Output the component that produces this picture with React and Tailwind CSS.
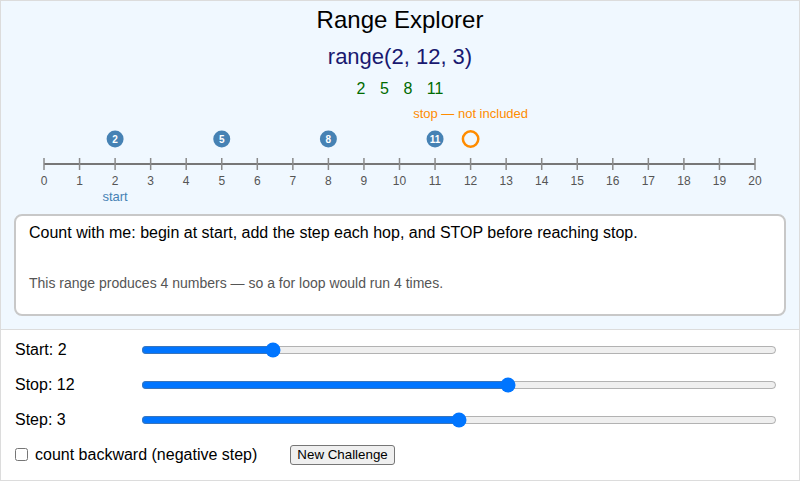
import React, { useState } from 'react';

const font = "font-['Liberation_Sans',Arial,Helvetica,sans-serif]";

// number line geometry (svg coords)
const X0 = 43;
const UNIT = 35.55;
const LINE_Y = 66;
const MAX = 20;

const xOf = (v) => X0 + v * UNIT;

const buildRange = (start, stop, step) => {
  const out = [];
  if (step > 0) for (let i = start; i < stop; i += step) out.push(i);
  if (step < 0) for (let i = start; i > stop; i += step) out.push(i);
  return out;
};

const NumberLine = ({ start, stop, values }) => {
  const ticks = Array.from({ length: MAX + 1 }, (_, i) => i);
  return (
    <svg width="798" height="116" className="block" fontFamily="'Liberation Sans', Arial, sans-serif">
      <text x={xOf(stop)} y="20" textAnchor="middle" fontSize="13" fill="#ff8c00">
        stop — not included
      </text>

      <line x1={xOf(0)} y1={LINE_Y} x2={xOf(MAX)} y2={LINE_Y} stroke="#777" strokeWidth="2" />
      {ticks.map((t) => (
        <g key={t}>
          <line x1={xOf(t)} y1={LINE_Y - 6} x2={xOf(t)} y2={LINE_Y + 6} stroke="#8a8a8a" strokeWidth="1.5" />
          <text x={xOf(t)} y={LINE_Y + 21} textAnchor="middle" fontSize="12" fill="#555">
            {t}
          </text>
        </g>
      ))}

      <text x={xOf(start)} y={LINE_Y + 37} textAnchor="middle" fontSize="13" fill="#4682b4">
        start
      </text>

      {values.map((v) => (
        <g key={v}>
          <circle cx={xOf(v)} cy="41" r="8.5" fill="#4682b4" />
          <text x={xOf(v)} y="44.5" textAnchor="middle" fontSize="10" fontWeight="bold" fill="#fff">
            {v}
          </text>
        </g>
      ))}

      <circle cx={xOf(stop)} cy="41" r="7.7" fill="none" stroke="#ff8c00" strokeWidth="2.5" />
    </svg>
  );
};

const SliderRow = ({ label, min, max, value, onChange }) => (
  <div className="h-[35px] flex items-center">
    <span className="w-[126px] text-[16px] text-black">{label}</span>
    <input
      type="range"
      min={min}
      max={max}
      value={value}
      onChange={(e) => onChange(Number(e.target.value))}
      className="w-[636px] m-0 accent-[#0075ff]"
    />
  </div>
);

const App = () => {
  const [start, setStart] = useState(2);
  const [stop, setStop] = useState(12);
  const [step, setStep] = useState(3);
  const [backward, setBackward] = useState(false);

  const realStep = backward ? -step : step;
  const values = buildRange(start, stop, realStep);

  return (
    <div className={`w-[800px] h-[481px] border border-[#dcdcdc] flex flex-col bg-white ${font}`}>
      {/* sketch area */}
      <div className="h-[329px] bg-[#f0f8ff] border-b border-[#dcdcdc] flex flex-col">
        <div className="pt-[5px] h-[33px] text-center text-[24px] leading-[28px] text-black">Range Explorer</div>
        <div className="mt-[9px] h-[28px] text-center text-[22px] leading-[28px] text-[#191970]">
          range({start}, {stop}, {realStep})
        </div>
        <div className="mt-[8px] h-[20px] flex justify-center gap-[14.5px] text-[16px] leading-[20px] text-[#006b00]">
          {values.map((v) => (
            <span key={v}>{v}</span>
          ))}
        </div>

        <div className="-mt-[1px]">
          <NumberLine start={start} stop={stop} values={values} />
        </div>

        <div className="mx-[13px] h-[102px] bg-white border-2 border-[#c8c8c8] rounded-[8px] pl-[13px] pt-[7px]">
          <p className="text-[16px] leading-[20px] text-black">
            Count with me: begin at start, add the step each hop, and STOP before reaching stop.
          </p>
          <p className="mt-[32px] text-[14px] leading-[17px] text-[#555]">
            This range produces {values.length} numbers — so a for loop would run {values.length} times.
          </p>
        </div>
      </div>

      {/* controls */}
      <div className="flex-1 pt-[2px] pl-[14px]">
        <SliderRow label={`Start: ${start}`} min={0} max={10} value={start} onChange={setStart} />
        <SliderRow label={`Stop: ${stop}`} min={1} max={20} value={stop} onChange={setStop} />
        <SliderRow label={`Step: ${step}`} min={1} max={5} value={step} onChange={setStep} />
        <div className="h-[35px] flex items-center">
          <input
            type="checkbox"
            checked={backward}
            onChange={(e) => setBackward(e.target.checked)}
            className="m-0 w-[13px] h-[13px]"
          />
          <span className="ml-[7px] text-[16px] text-black">count backward (negative step)</span>
          <button className="ml-[33px] px-[6px] py-[1px] bg-[#efefef] border border-[#767676] rounded-[3px] text-[13.33px] leading-[16px] text-black">
            New Challenge
          </button>
        </div>
      </div>
    </div>
  );
};

export default App;
